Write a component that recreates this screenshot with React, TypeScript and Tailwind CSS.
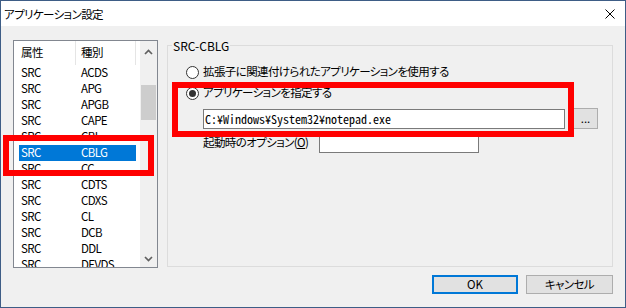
const rows = ["ACDS", "APG", "APGB", "CAPE", "CBL", "CBLG", "CC", "CDTS", "CDXS", "CL", "DCB", "DDL", "DEVDS"];

function Radio({ checked }: { checked?: boolean }) {
  return (
    <span className="w-[13px] h-[13px] rounded-full border border-[#333333] bg-white flex items-center justify-center shrink-0">
      {checked && <span className="w-[7px] h-[7px] rounded-full bg-[#333333]" />}
    </span>
  );
}

function Chevron({ up }: { up?: boolean }) {
  return (
    <svg width="9" height="6" viewBox="0 0 9 6">
      <polyline
        points={up ? "1,5 4.5,1.5 8,5" : "1,1 4.5,4.5 8,1"}
        fill="none"
        stroke="#606060"
        strokeWidth="1.7"
      />
    </svg>
  );
}

export default function App() {
  return (
    <div className="w-[626px] h-[308px] border border-[#3e5d86] bg-[#f0f0f0] relative flex flex-col text-[11.5px] tracking-[-0.6px] text-black font-['Noto_Sans_CJK_JP',sans-serif] [font-feature-settings:'palt'] overflow-hidden">
      {/* Title bar */}
      <div className="h-[25px] bg-white flex items-center justify-between pl-[3px] pr-[10px] shrink-0">
        <span className="leading-[16px]">アプリケーション設定</span>
        <svg width="10" height="10" viewBox="0 0 10 10">
          <path d="M0.5 0.5 L9.5 9.5 M9.5 0.5 L0.5 9.5" stroke="#000" strokeWidth="1" />
        </svg>
      </div>

      {/* Main */}
      <div className="flex pl-[12px] pt-[14px] shrink-0">
        {/* List box */}
        <div className="w-[145px] h-[228px] border border-[#828790] bg-white flex overflow-hidden">
          <div className="w-[126px] flex flex-col overflow-hidden">
            <div className="h-[24px] flex shrink-0">
              <div className="w-[62px] border-r border-[#e5e5e5] pl-[7px] flex items-center">属性</div>
              <div className="w-[60px] border-r border-[#e5e5e5] pl-[5px] flex items-center">種別</div>
            </div>
            {rows.map((r) => {
              const sel = r === "CBLG";
              return (
                <div key={r} className="h-[16px] flex items-center shrink-0">
                  <div
                    className={
                      sel
                        ? "ml-[5px] w-[117px] h-[16px] pl-[2px] flex items-center bg-[#0078d7] text-white"
                        : "ml-[5px] w-[117px] h-[16px] pl-[2px] flex items-center"
                    }
                  >
                    <span className="w-[60px]">SRC</span>
                    <span>{r}</span>
                  </div>
                </div>
              );
            })}
          </div>
          <div className="w-[17px] bg-[#f0f0f0] flex flex-col">
            <div className="h-[22px] flex items-center justify-center">
              <Chevron up />
            </div>
            <div className="mt-[22px] h-[35px] mx-[1px] bg-[#cdcdcd]" />
            <div className="flex-1" />
            <div className="h-[17px] flex items-center justify-center">
              <Chevron />
            </div>
          </div>
        </div>

        {/* Group box */}
        <div className="ml-[9px] mt-[5px] w-[446px] h-[222px] border border-[#dcdcdc] relative">
          <span className="absolute left-[4px] -top-[8px] px-[1px] bg-[#f0f0f0] leading-[16px] text-[12px] tracking-normal">SRC-CBLG</span>
          <div className="pl-[18px] pt-[18px] flex flex-col">
            <div className="h-[16px] flex items-center gap-[4px]">
              <Radio />
              <span className="whitespace-nowrap">拡張子に関連付けられたアプリケーションを使用する</span>
            </div>
            <div className="h-[16px] mt-[5px] flex items-center gap-[4px]">
              <Radio checked />
              <span className="whitespace-nowrap">アプリケーションを指定する</span>
            </div>
            <div className="mt-[7px] pl-[17px] flex items-start">
              <div className="mt-[1px] w-[362px] h-[20px] border border-[#7a7a7a] bg-white flex items-center pl-[1px] text-[12px] tracking-normal font-['Noto_Sans_Mono_CJK_JP','Liberation_Mono',monospace] [font-feature-settings:normal]">
                C:¥Windows¥System32¥notepad.exe
              </div>
              <div className="ml-[8px] w-[25px] h-[21px] border border-[#adadad] bg-[#e1e1e1] flex items-center justify-center leading-none tracking-normal">
                ...
              </div>
            </div>
            <div className="mt-[3px] pl-[17px] flex items-center h-[21px]">
              <span className="w-[116px] shrink-0 whitespace-nowrap">
                起動時のオプション(<span className="underline">O</span>)
              </span>
              <div className="w-[160px] h-[21px] shrink-0 border border-[#7a7a7a] bg-white" />
            </div>
          </div>
        </div>
      </div>

      {/* Buttons */}
      <div className="mt-[7px] flex justify-end pr-[12px] gap-[8px]">
        <div className="w-[86px] h-[19px] border-2 border-[#0078d7] bg-[#e1e1e1] flex items-center justify-center leading-none tracking-normal">
          OK
        </div>
        <div className="w-[87px] h-[19px] border border-[#adadad] bg-[#e1e1e1] flex items-center justify-center leading-none">
          キャンセル
        </div>
      </div>

      {/* Red highlight overlays */}
      <div className="absolute left-[2px] top-[134px] w-[151px] h-[41px] border-[6px] border-[#ff0000]" />
      <div className="absolute left-[171px] top-[81px] w-[402px] h-[55px] border-[6px] border-[#ff0000]" />
    </div>
  );
}
